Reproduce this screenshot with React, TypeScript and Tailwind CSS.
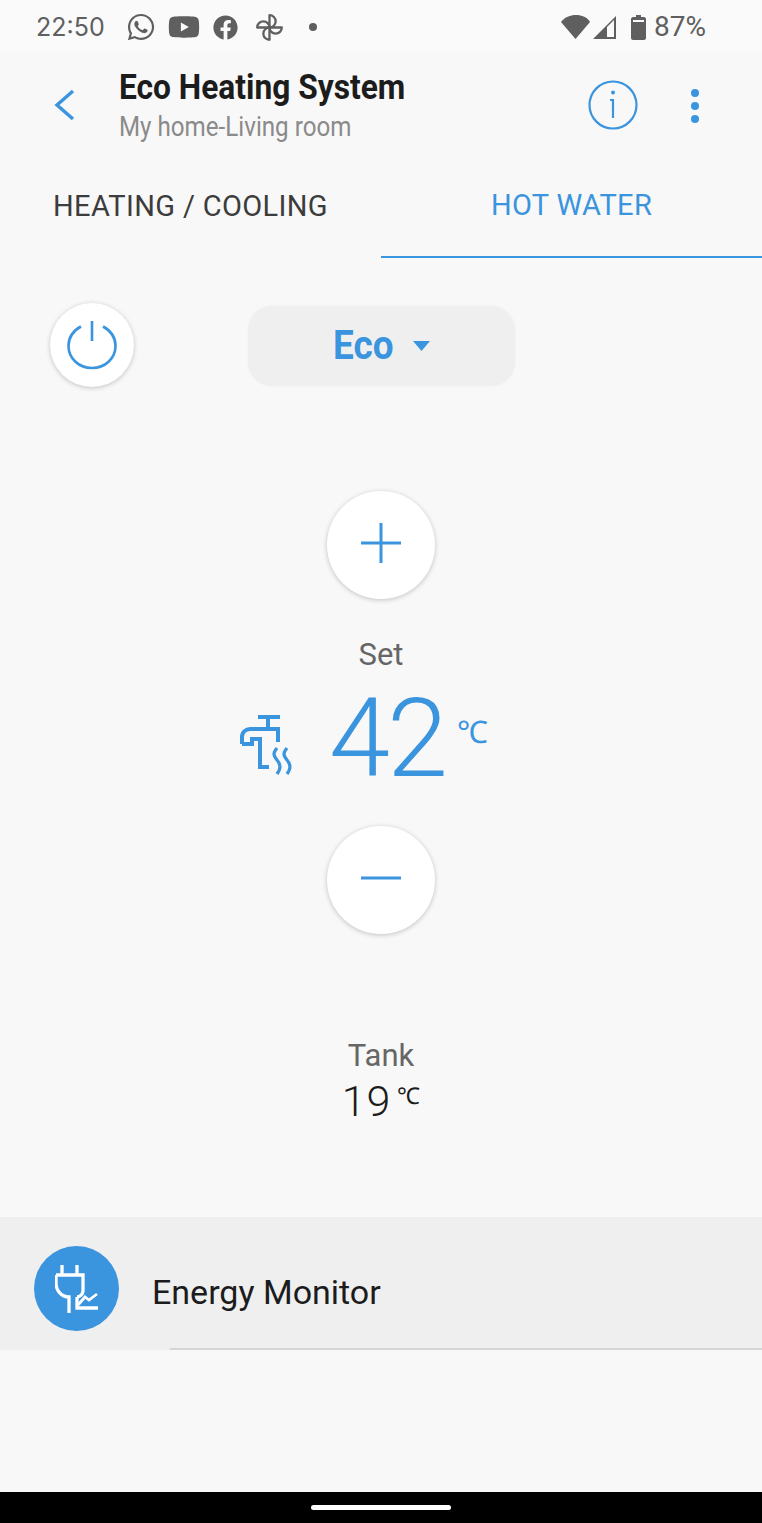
import { FaWhatsapp, FaYoutube, FaFacebook } from "react-icons/fa";

const Pinwheel = () => (
  <svg className="ml-[17px]" width="29" height="29" viewBox="0 0 29 29" fill="none" stroke="#5f5f5f" strokeWidth="2.3" strokeLinejoin="round">
    <path d="M14.5 14.5V2.200A6.150 6.150 0 0 1 14.500 14.500Z" />
    <path d="M14.5 14.5H26.800A6.150 6.150 0 0 1 14.500 14.500Z" />
    <path d="M14.5 14.5V26.800A6.150 6.150 0 0 1 14.500 14.500Z" />
    <path d="M14.5 14.5H2.200A6.150 6.150 0 0 1 14.500 14.500Z" />
  </svg>
);

const Faucet = () => (
  <svg className="mt-[14px]" width="52" height="62" viewBox="0 0 52 62" fill="none" stroke="#3a94de" strokeWidth="4">
    <path d="M18 2H40M28 2V14" />
    <path d="M2 29V22C2 17 6 14 10 14H38V27" />
    <path d="M2 29H12V24H20V52H29" />
    <path d="M37 33C33 38 33 40 37 45C41 50 41 53 37 59" strokeWidth="3.2" />
    <path d="M47 33C43 38 43 40 47 45C51 50 51 53 47 59" strokeWidth="3.2" />
  </svg>
);

const Plug = () => (
  <svg className="mb-[-1px]" width="44" height="50" viewBox="0 0 44 50" fill="none" stroke="#ffffff" strokeWidth="3.3">
    <path d="M7 1V11M22 1V11" />
    <path d="M1 11H28V27C28 30 25 33 22 33" />
    <path d="M1 11V19C1 26 6 33 14 33V49" />
    <path d="M22 33V44H43" />
    <path d="M23 41L30 33L34 36L42 30" strokeWidth="2.8" />
  </svg>
);

const Round = ({ className, children }: { className: string; children: React.ReactNode }) => (
  <div className={`flex items-center justify-center rounded-full bg-white shadow-[0_1px_5px_rgba(0,0,0,0.22)] ${className}`}>{children}</div>
);

export default function App() {
  return (
    <div className="flex h-[1523px] w-[762px] flex-col overflow-hidden bg-[#f8f8f8] font-['Roboto',sans-serif]">
      {/* status bar */}
      <div className="flex h-[52px] shrink-0 items-center bg-[#fafafa] pl-[36px] pr-[56px] pt-[2px] text-[#5f5f5f]">
        <span className="w-[70px] font-['Inter',sans-serif] text-[25px] leading-none">22:50</span>
        <FaWhatsapp className="ml-[20px] text-[30px]" />
        <FaYoutube className="ml-[12px] text-[32px]" />
        <FaFacebook className="ml-[13px] text-[25px]" />
        <Pinwheel />
        <span className="ml-[25px] h-[8px] w-[8px] rounded-full bg-[#5f5f5f]" />
        <svg className="ml-auto" width="56" height="26" viewBox="0 0 56 26" fill="#5f5f5f">
          <path d="M0 8C4 3 9 1 15 1C21 1 26 3 29 8L14.5 25Z" />
          <path d="M32 25L55 2V25ZM46 13V23H53V6Z" fillRule="evenodd" />
        </svg>
        <svg className="ml-[14px]" width="15" height="25" viewBox="0 0 15 25" fill="#5f5f5f">
          <path d="M5 0H10V2H13C14 2 15 3 15 4V23C15 24 14 25 13 25H2C1 25 0 24 0 23V4C0 3 1 2 2 2H5ZM2 5V7H13V5Z" fillRule="evenodd" />
        </svg>
        <span className="ml-[8px] text-[28px] leading-none">87%</span>
      </div>

      {/* app bar */}
      <div className="flex h-[108px] shrink-0 items-center">
        <svg className="mb-[2px] ml-[53px]" width="22" height="32" viewBox="0 0 22 32" fill="none" stroke="#3a94de" strokeWidth="3.4">
          <path d="M20 2L4 16L20 30" />
        </svg>
        <div className="ml-[44px] flex w-[400px] flex-col">
          <span className="origin-left scale-x-[0.906] whitespace-nowrap text-[35px] font-bold leading-[42px] text-[#1c1c1c]">Eco Heating System</span>
          <span className="origin-left scale-x-[0.895] whitespace-nowrap text-[27px] leading-[36px] text-[#8a8a8a]">My home-Living room</span>
        </div>
        <svg className="mb-[2px] ml-[69px]" width="50" height="50" viewBox="0 0 50 50" fill="none" stroke="#3a94de" strokeWidth="2.2">
          <circle cx="25" cy="25" r="23.5" />
          <path d="M22 20H25V38" />
          <circle cx="25" cy="12.5" r="2" fill="#3a94de" stroke="none" />
        </svg>
        <div className="ml-[53px] flex flex-col gap-[5px]">
          <span className="h-[8px] w-[8px] rounded-full bg-[#3a94de]" />
          <span className="h-[8px] w-[8px] rounded-full bg-[#3a94de]" />
          <span className="h-[8px] w-[8px] rounded-full bg-[#3a94de]" />
        </div>
      </div>

      {/* tabs */}
      <div className="flex h-[98px] shrink-0 text-[29px] tracking-[0.35px]">
        <div className="flex w-[381px] items-center justify-center pb-[5px] text-[#3c3c3c]">HEATING / COOLING</div>
        <div className="flex w-[381px] items-center justify-center border-b-2 border-[#3a94de] pb-[4px] text-[#3a94de]">HOT WATER</div>
      </div>

      {/* mode row */}
      <div className="relative mt-[46px] flex h-[83px] shrink-0 items-center justify-center">
        <Round className="absolute left-[50px] top-[-1px] h-[84px] w-[84px]">
          <svg width="50" height="50" viewBox="0 0 50 50" fill="none" stroke="#3a94de" strokeWidth="2.6">
            <path d="M14 6.500C6.500 10.500 1.500 17.500 1.500 26C1.500 38 11.500 48 25 48C38.500 48 48.500 38 48.500 26C48.500 17.500 43.500 10.500 36 6.500" />
            <path d="M25 1V21" />
          </svg>
        </Round>
        <div className="flex h-[80px] w-[267px] items-center justify-center rounded-[24px] bg-[#efefef] shadow-[0_0_3px_rgba(0,0,0,0.04)]">
          <span className="w-[59px] origin-left scale-x-[0.9] whitespace-nowrap text-[41px] font-bold leading-none text-[#3a94de]">Eco</span>
          <svg className="ml-[21px]" width="17" height="10" viewBox="0 0 17 10" fill="#3a94de"><path d="M0 0H17L8.500 10Z" /></svg>
        </div>
      </div>

      {/* controls */}
      <div className="flex flex-col items-center">
        <Round className="mt-[104px] h-[108px] w-[108px]">
          <svg className="mb-[4px]" width="42" height="42" viewBox="0 0 42 42" stroke="#3a94de" strokeWidth="3"><path d="M21 1V41M1 21H41" /></svg>
        </Round>
        <span className="mt-[36px] text-[31px] leading-[40px] text-[#666666]">Set</span>
        <div className="relative mt-[10px] flex h-[108px] w-[282px] items-center">
          <Faucet />
          <span className="ml-[37px] text-[110px] font-light leading-none tracking-[-3px] text-[#3a94de]">42</span>
          <span className="absolute left-[217px] top-[28px] text-[31px] font-light leading-[40px] text-[#3a94de]">℃</span>
        </div>
        <Round className="mt-[33px] h-[108px] w-[108px]">
          <svg className="mb-[5px]" width="42" height="4" viewBox="0 0 42 4" stroke="#3a94de" strokeWidth="3"><path d="M1 2H41" /></svg>
        </Round>
        <span className="mt-[102px] text-[31px] leading-[40px] text-[#666666]">Tank</span>
        <div className="flex h-[50px] items-start">
          <span className="text-[43px] font-light leading-[50px] tracking-[1px] text-[#1c1c1c]">19</span>
          <span className="ml-[6px] mt-[6px] text-[23px] font-light leading-[30px] text-[#1c1c1c]">℃</span>
        </div>
      </div>

      {/* energy monitor */}
      <div className="relative mt-[91px] flex h-[133px] shrink-0 items-center bg-[#efefef]">
        <div className="ml-[34px] mt-[10px] flex h-[85px] w-[85px] items-center justify-center rounded-full bg-[#3a94de]">
          <Plug />
        </div>
        <span className="ml-[33px] mt-[17px] text-[34px] text-[#1c1c1c]">Energy Monitor</span>
        <div className="absolute bottom-0 left-[170px] right-0 h-[2px] bg-[#d5d5d5]" />
      </div>

      <div className="flex-1" />

      {/* nav bar */}
      <div className="flex h-[31px] shrink-0 items-center justify-center bg-black">
        <span className="h-[5px] w-[140px] rounded-full bg-white" />
      </div>
    </div>
  );
}
